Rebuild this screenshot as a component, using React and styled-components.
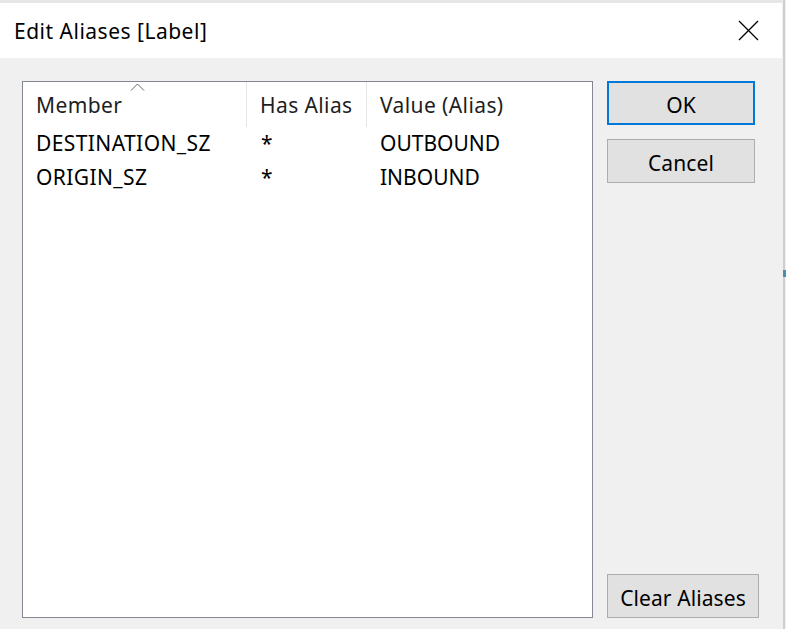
import React from 'react';
import styled, {createGlobalStyle} from 'styled-components';

const Global = createGlobalStyle`
  html, body {
    margin: 0;
    padding: 0;
    background: #f0f0f0;
  }
  body {
    font-family: "Noto Sans", "Open Sans", Arial, sans-serif;
    color: #000;
  }
`

const columns = [
    {key: 'member', title: 'Member', sorted: true},
    {key: 'hasAlias', title: 'Has Alias'},
    {key: 'alias', title: 'Value (Alias)'}
]

const rows = [
    {member: 'DESTINATION_SZ', hasAlias: '*', alias: 'OUTBOUND'},
    {member: 'ORIGIN_SZ', hasAlias: '*', alias: 'INBOUND'}
]

const gridCols = '224px 120px 1fr'

const Screen = styled.div`
  display: flex;
  width: 786px;
  height: 629px;
  overflow: hidden;
`

const Dialog = styled.div`
  width: 782px;
  display: flex;
  flex-direction: column;
  border-top: 3px solid #e6e6e6;
  box-sizing: border-box;
`

const Edge = styled.div`
  flex: 1;
  position: relative;
  background: linear-gradient(to right, #f0f0f0 0, #f0f0f0 1px, #cfcfcf 1px, #cfcfcf 3px, #f0f0f0 3px);
  span {
    position: absolute;
    left: 1px;
    top: 270px;
    width: 3px;
    height: 7px;
    background: #4a8db5;
  }
`

const TitleBar = styled.div`
  height: 55px;
  background: #fff;
  display: flex;
  align-items: center;
  justify-content: space-between;
  padding: 0 23px 0 14px;
  font-size: 21px;
  letter-spacing: 0.5px;
`

const Close = styled.svg`
  width: 21px;
  height: 21px;
  display: block;
`

const Body = styled.div`
  flex: 1;
  display: flex;
  gap: 14px;
  padding: 23px 0 11px 22px;
`

const ListBox = styled.div`
  width: 571px;
  box-sizing: border-box;
  background: #fff;
  border: 1px solid #828790;
  display: flex;
  flex-direction: column;
`

const HeaderRow = styled.div`
  display: grid;
  grid-template-columns: ${gridCols};
  height: 45px;
`

const HeaderCell = styled.div`
  position: relative;
  display: flex;
  align-items: center;
  padding-left: 13px;
  font-size: 21px;
  color: #1e1e1e;
  border-right: ${p => p.$last ? 'none' : '1px solid #e5e5e5'};
  letter-spacing: 0.4px;
`

const SortArrow = styled.svg`
  position: absolute;
  left: 107px;
  top: 1px;
  width: 15px;
  height: 8px;
`

const Row = styled.div`
  display: grid;
  grid-template-columns: ${gridCols};
  height: 34px;
  align-items: center;
`

const Cell = styled.div`
  padding-left: ${p => p.$col === 1 ? 14 : 13}px;
  font-size: 21px;
  letter-spacing: ${p => p.$col === 2 ? 0 : 0.4}px;
  white-space: nowrap;
  margin-top: -3px;
`

const Buttons = styled.div`
  display: flex;
  flex-direction: column;
  gap: 14px;
`

const Spacer = styled.div`
  flex: 1;
`

const Button = styled.button`
  width: ${p => p.$wide ? 152 : 148}px;
  height: 44px;
  box-sizing: border-box;
  background: #e1e1e1;
  border: ${p => p.$default ? '2px solid #0078d7' : '1px solid #adadad'};
  font-family: inherit;
  font-size: 21px;
  letter-spacing: 0.1px;
  color: #000;
  padding: 3px 0 0;
`

export default function App() {
    return (
        <Screen>
            <Global/>
            <Dialog>
                <TitleBar>
                    <span>Edit Aliases [Label]</span>
                    <Close viewBox="0 0 21 21">
                        <path d="M1 1 L20 20 M20 1 L1 20" stroke="#000" strokeWidth="1.3" fill="none"/>
                    </Close>
                </TitleBar>
                <Body>
                    <ListBox>
                        <HeaderRow>
                            {columns.map((c, i) => (
                                <HeaderCell key={c.key} $last={i === columns.length - 1}>
                                    {c.sorted && (
                                        <SortArrow viewBox="0 0 15 8">
                                            <path d="M1 7.5 L7.5 1 L14 7.5" stroke="#666" strokeWidth="1" fill="none"/>
                                        </SortArrow>
                                    )}
                                    {c.title}
                                </HeaderCell>
                            ))}
                        </HeaderRow>
                        {rows.map(r => (
                            <Row key={r.member}>
                                <Cell $col={0}>{r.member}</Cell>
                                <Cell $col={1}>{r.hasAlias}</Cell>
                                <Cell $col={2}>{r.alias}</Cell>
                            </Row>
                        ))}
                    </ListBox>
                    <Buttons>
                        <Button $default>OK</Button>
                        <Button>Cancel</Button>
                        <Spacer/>
                        <Button $wide>Clear Aliases</Button>
                    </Buttons>
                </Body>
            </Dialog>
            <Edge><span/></Edge>
        </Screen>
    );
}
